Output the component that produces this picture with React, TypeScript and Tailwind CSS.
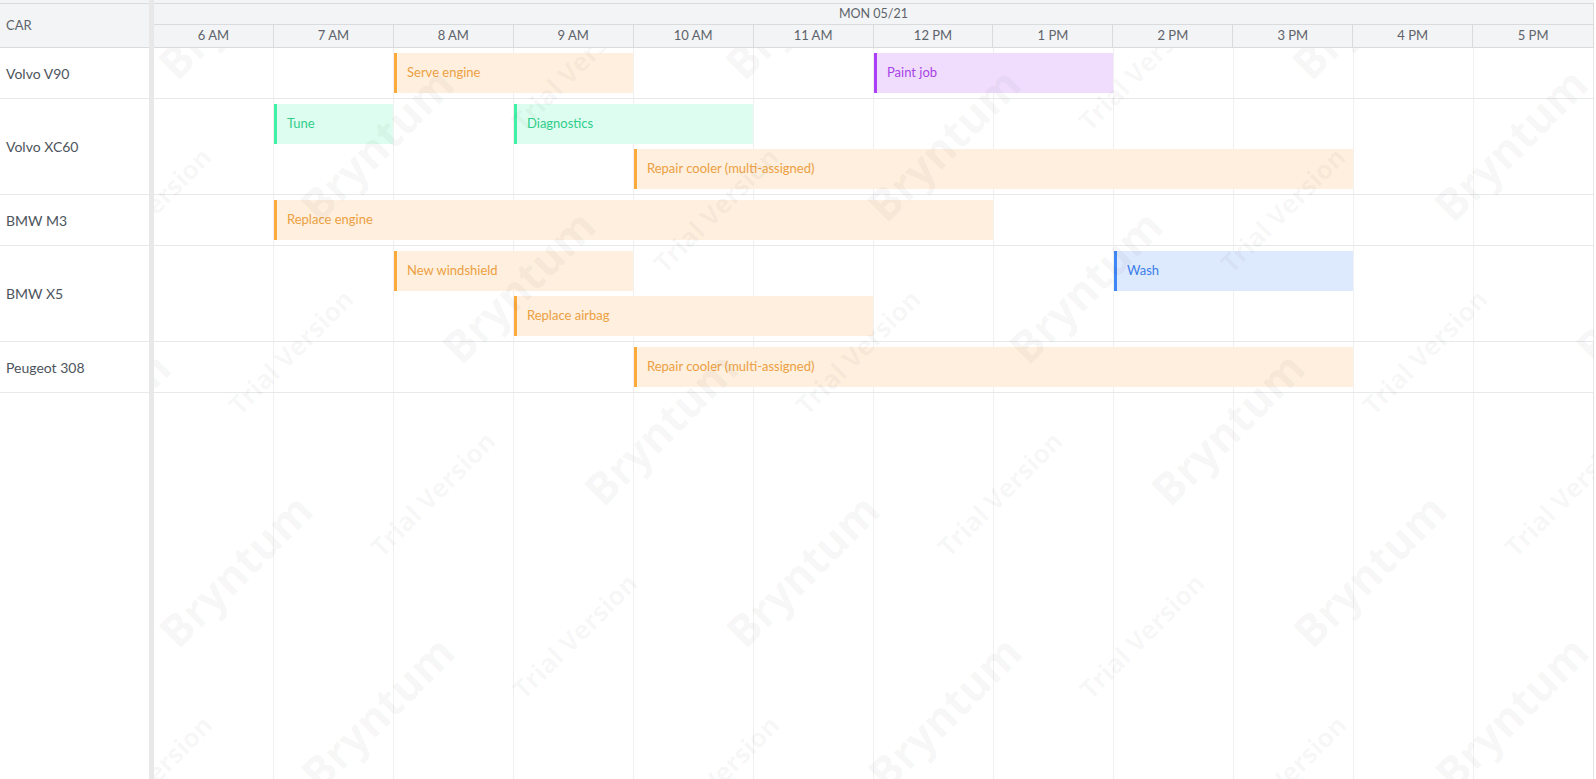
import React from 'react';

type Color = 'orange' | 'purple' | 'green' | 'blue';

type Task = {
  name: string;
  start: number;
  end: number;
  lane: number;
  color: Color;
};

type Car = {
  name: string;
  lanes: number;
  tasks: Task[];
};

const HOURS = ['6 AM', '7 AM', '8 AM', '9 AM', '10 AM', '11 AM', '12 PM', '1 PM', '2 PM', '3 PM', '4 PM', '5 PM'];
const COL = 120;

const cars: Car[] = [
  {
    name: 'Volvo V90',
    lanes: 1,
    tasks: [
      { name: 'Serve engine', start: 8, end: 10, lane: 0, color: 'orange' },
      { name: 'Paint job', start: 12, end: 14, lane: 0, color: 'purple' },
    ],
  },
  {
    name: 'Volvo XC60',
    lanes: 2,
    tasks: [
      { name: 'Tune', start: 7, end: 8, lane: 0, color: 'green' },
      { name: 'Diagnostics', start: 9, end: 11, lane: 0, color: 'green' },
      { name: 'Repair cooler (multi-assigned)', start: 10, end: 16, lane: 1, color: 'orange' },
    ],
  },
  {
    name: 'BMW M3',
    lanes: 1,
    tasks: [{ name: 'Replace engine', start: 7, end: 13, lane: 0, color: 'orange' }],
  },
  {
    name: 'BMW X5',
    lanes: 2,
    tasks: [
      { name: 'New windshield', start: 8, end: 10, lane: 0, color: 'orange' },
      { name: 'Wash', start: 14, end: 16, lane: 0, color: 'blue' },
      { name: 'Replace airbag', start: 9, end: 12, lane: 1, color: 'orange' },
    ],
  },
  {
    name: 'Peugeot 308',
    lanes: 1,
    tasks: [{ name: 'Repair cooler (multi-assigned)', start: 10, end: 16, lane: 0, color: 'orange' }],
  },
];

const colorClass: Record<Color, string> = {
  orange: 'bg-[#feefde] border-[#fdaa3c] text-[#eca042]',
  purple: 'bg-[#f0ddfe] border-[#aa3ff7] text-[#a843e6]',
  green: 'bg-[#dcfdef] border-[#3ff0a6] text-[#2fce8b]',
  blue: 'bg-[#dde9fd] border-[#3f87f7] text-[#3b7ee8]',
};

// watermark lattice, in timeline body coordinates
const marks: { text: string; x: number; y: number; big: boolean }[] = [];
for (let j = -5; j <= 3; j++) {
  for (let i = -3; i <= 4; i++) {
    const bx = 81 + 567 * i + 142 * j;
    const by = 522 + 142 * j;
    if (bx > -200 && bx < 1640 && by > -150 && by < 880) marks.push({ text: 'Bryntum', x: bx, y: by, big: true });
    const tx = 279 + 567 * i + 142 * j;
    const ty = 446 + 142 * j;
    if (tx > -200 && tx < 1640 && ty > -150 && ty < 880) marks.push({ text: 'Trial Version', x: tx, y: ty, big: false });
  }
}

function rowHeight(car: Car) {
  return car.lanes === 2 ? 'h-[96px]' : 'h-[51px]';
}

export default function App() {
  return (
    <div className="w-[1596px] h-[779px] overflow-hidden bg-white flex font-['Lato','Liberation_Sans',sans-serif]">
      {/* left grid */}
      <div className="w-[149px] flex flex-col">
        <div className="h-[48px] pt-[3px] bg-[#f3f4f5] border-b border-[#dadbdd]">
          <div className="h-full border-t border-[#dadbdd] flex items-center px-[6px] text-[13px] text-[#5d636b]">CAR</div>
        </div>
        {cars.map((car) => (
          <div
            key={car.name}
            className={`${rowHeight(car)} border-b border-[#e7e8e9] flex items-center px-[6px] text-[14px] text-[#4d545c]`}
          >
            {car.name}
          </div>
        ))}
      </div>

      {/* splitter */}
      <div className="w-[5px] bg-[#e8e8e8]" />

      {/* timeline */}
      <div className="w-[1440px] flex flex-col">
        <div className="h-[48px] pt-[3px] bg-[#f3f4f5] border-b border-[#dadbdd]">
          <div className="h-full border-t border-r border-[#dadbdd] flex flex-col">
            <div className="h-[21px] border-b border-[#dadbdd] flex items-center justify-center text-[12.5px] text-[#5d636b]">
              MON 05/21
            </div>
            <div className="flex-1 flex">
              {HOURS.map((h) => (
                <div
                  key={h}
                  className="w-[120px] border-r border-[#dadbdd] last:border-r-0 flex items-center justify-center text-[13px] text-[#5d636b]"
                >
                  {h}
                </div>
              ))}
            </div>
          </div>
        </div>

        <div className="relative flex-1 overflow-hidden">
          {/* column lines */}
          <div className="absolute inset-0 flex">
            {HOURS.map((h, i) => (
              <div
                key={h}
                className={`w-[120px] h-full border-r ${i === HOURS.length - 1 ? 'border-[#e2e3e4]' : 'border-[#f0f0f1]'}`}
              />
            ))}
          </div>

          <div className="relative flex flex-col">
            {cars.map((car) => (
              <div key={car.name} className={`relative ${rowHeight(car)} border-b border-r border-[#e7e8e9]`}>
                {car.tasks.map((t) => (
                  <div
                    key={t.name + t.start}
                    className={`absolute h-[40px] border-l-[3px] pl-[10px] flex items-center text-[13px] whitespace-nowrap overflow-hidden ${colorClass[t.color]}`}
                    style={{ left: (t.start - 6) * COL, width: (t.end - t.start) * COL - 1, top: 5 + t.lane * 45 }}
                  >
                    {t.name}
                  </div>
                ))}
              </div>
            ))}
          </div>

          {/* trial watermark */}
          <div className="absolute inset-0 pointer-events-none">
            {marks.map((m, k) => (
              <span
                key={k}
                className={`absolute whitespace-nowrap font-bold -translate-x-1/2 -translate-y-1/2 -rotate-45 text-[rgba(0,0,0,0.045)] font-['Open_Sans','Liberation_Sans',sans-serif] ${
                  m.big ? 'text-[44px]' : 'text-[26px]'
                }`}
                style={{ left: m.x, top: m.y }}
              >
                {m.text}
              </span>
            ))}
          </div>
        </div>
      </div>
    </div>
  );
}
